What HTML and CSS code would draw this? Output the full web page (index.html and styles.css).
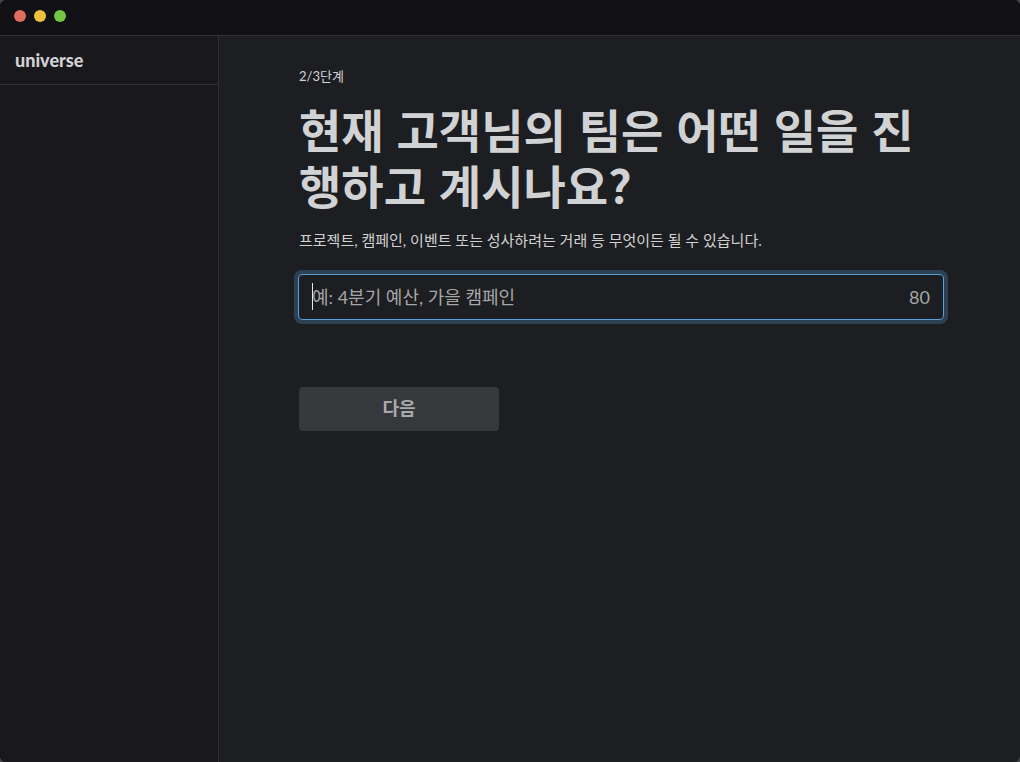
FILE: index.html
```html
<!DOCTYPE html>
<html lang="ko">
<head>
<meta charset="utf-8">
<meta name="viewport" content="width=device-width, initial-scale=1">
<title>universe</title>
<link rel="stylesheet" href="styles.css">
</head>
<body>
<div class="window">
  <header class="titlebar">
    <button class="dot dot-close" type="button" aria-label="닫기"></button>
    <button class="dot dot-minimize" type="button" aria-label="최소화"></button>
    <button class="dot dot-zoom" type="button" aria-label="확대"></button>
  </header>
  <div class="body">
    <aside class="sidebar">
      <div class="workspace">universe</div>
    </aside>
    <main class="main">
      <form class="setup">
        <p class="step">2/3단계</p>
        <h1 class="title"><label for="project">현재 고객님의 팀은 어떤 일을 진행하고 계시나요?</label></h1>
        <p class="hint" id="hint">프로젝트, 캠페인, 이벤트 또는 성사하려는 거래 등 무엇이든 될 수 있습니다.</p>
        <div class="field">
          <span class="caret"></span>
          <input class="input" id="project" type="text" maxlength="80" placeholder="예: 4분기 예산, 가을 캠페인" aria-describedby="hint">
          <span class="count">80</span>
        </div>
        <button class="next" type="submit" disabled>다음</button>
      </form>
    </main>
  </div>
</div>
</body>
</html>
```

FILE: styles.css
```css
* {
  box-sizing: border-box;
}

body {
  margin: 0;
  background: #47484a;
  color: #d1d2d3;
  font-family: Lato, "Noto Sans CJK KR", sans-serif;
  font-size: 15px;
}

.window {
  display: flex;
  flex-direction: column;
  min-height: 100vh;
  overflow: hidden;
  border-radius: 6px;
  background: #1d1e21;
}

.titlebar {
  display: flex;
  gap: 8px;
  height: 36px;
  padding: 10px 14px;
  border-bottom: 1px solid #313135;
  background: #121116;
}

.dot {
  width: 12px;
  height: 12px;
  padding: 0;
  border: 0;
  border-radius: 50%;
}

.dot-close {
  background: #e26c5e;
}

.dot-minimize {
  background: #eebf3d;
}

.dot-zoom {
  background: #75c545;
}

.body {
  display: flex;
  flex: 1;
}

.sidebar {
  flex: 0 0 219px;
  border-right: 1px solid #313135;
  background: #19181d;
}

.workspace {
  padding: 0 15px;
  border-bottom: 1px solid #313135;
  font-size: 18px;
  font-weight: 900;
  line-height: 48px;
}

.main {
  flex: 1;
  min-width: 0;
  padding: 28px 72px 40px 80px;
}

.setup {
  max-width: 645px;
}

.step {
  margin: 0 0 12px;
  font-size: 13px;
  line-height: 24px;
}

.title {
  margin: 0 0 16px;
  font-family: "Noto Sans CJK KR", sans-serif;
  font-size: 46px;
  font-weight: 700;
  line-height: 56px;
}

.hint {
  margin: 0 0 22px;
  line-height: 24px;
}

.field {
  position: relative;
  display: flex;
  align-items: center;
  height: 46px;
  margin: 0 0 67px -1px;
  padding: 0 13px 1px;
  border: 1px solid #5a9fd8;
  border-radius: 4px;
  box-shadow: 0 0 0 4px #2b4255;
  color: #a5a6a8;
  font-size: 18px;
}

.caret {
  position: absolute;
  left: 13px;
  width: 1px;
  height: 27px;
  background: #e8e8e8;
}

.input {
  flex: 1;
  min-width: 0;
  padding: 0;
  border: 0;
  outline: 0;
  background: transparent;
  color: #d1d2d3;
  font: inherit;
  line-height: 28px;
}

.input::placeholder {
  color: #a5a6a8;
  opacity: 1;
}

.next {
  display: block;
  width: 200px;
  height: 44px;
  padding: 0 0 4px;
  border: 0;
  border-radius: 4px;
  background: #37383b;
  color: #a9aaac;
  font-family: inherit;
  font-size: 18px;
  font-weight: 700;
}
```
